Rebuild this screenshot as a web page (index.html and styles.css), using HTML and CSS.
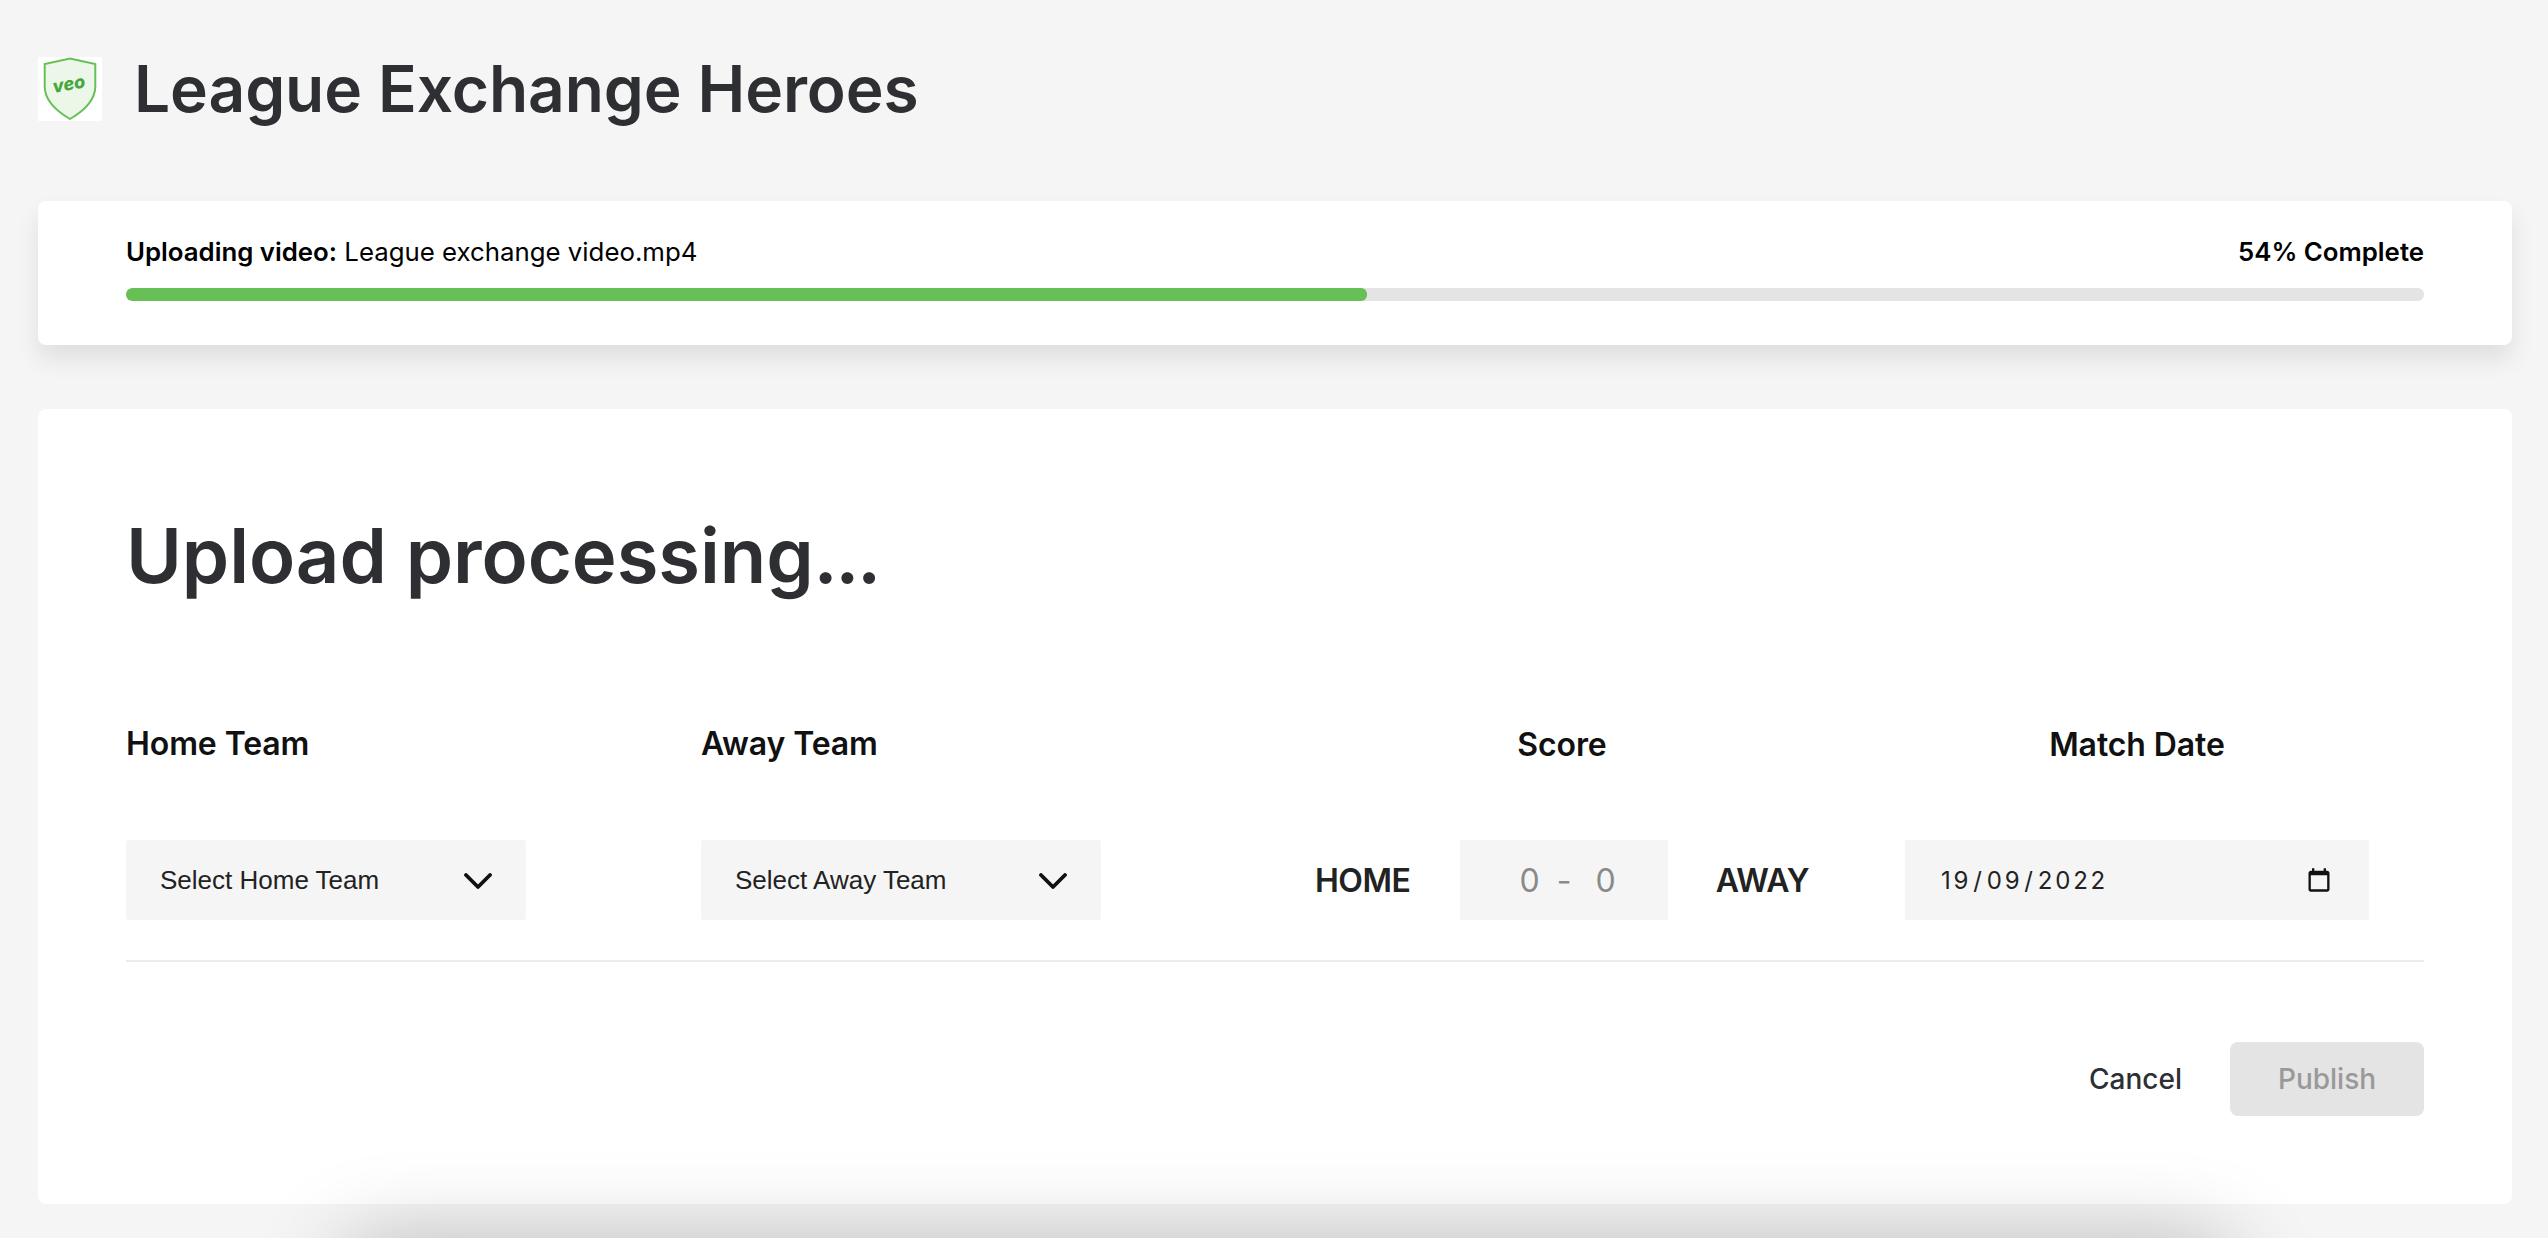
FILE: index.html
```html
<!DOCTYPE html>
<html lang="en">
<head>
<meta charset="utf-8">
<title>League Exchange Heroes</title>
<link rel="stylesheet" href="styles.css">
</head>
<body>
<header class="page-header">
  <div class="logo">
    <svg viewBox="0 0 64 64" width="64" height="64" aria-hidden="true">
      <path class="shield" d="M32 1.500 L57.300 7 V30 C57 44 44 55 32 62 C20 55 7 44 6.700 30 V7 Z"/>
      <text class="veo" x="31" y="33" text-anchor="middle" transform="rotate(-10 32 28)">veo</text>
    </svg>
  </div>
  <h1 class="team-name">League Exchange Heroes</h1>
</header>

<section class="card upload-card">
  <div class="upload-row">
    <div><strong>Uploading video:</strong> League exchange video.mp4</div>
    <strong>54% Complete</strong>
  </div>
  <div class="track"><div class="fill" style="width:54%"></div></div>
</section>

<section class="card form-card">
  <h2 class="form-title">Upload processing<span class="dots">...</span></h2>
  <div class="form-grid">
    <div class="field team-field">
      <div class="field-label">Home Team</div>
      <div class="select">
        <span>Select Home Team</span>
        <svg class="chevron" viewBox="0 0 28 16" width="28" height="16" aria-hidden="true"><path d="M2 2 L14 14 L26 2"/></svg>
      </div>
    </div>
    <div class="field team-field">
      <div class="field-label">Away Team</div>
      <div class="select">
        <span>Select Away Team</span>
        <svg class="chevron" viewBox="0 0 28 16" width="28" height="16" aria-hidden="true"><path d="M2 2 L14 14 L26 2"/></svg>
      </div>
    </div>
    <div class="field score-field">
      <div class="field-label centered">Score</div>
      <div class="score-row">
        <span class="side">HOME</span>
        <div class="score-box"><span>0</span><span class="dash">-</span><span>0</span></div>
        <span class="side">AWAY</span>
      </div>
    </div>
    <div class="field date-field">
      <div class="field-label centered">Match Date</div>
      <div class="date-box">
        <span class="date-value">19<i>/</i>09<i>/</i>2022</span>
        <svg class="calendar" viewBox="0 0 24 24" width="28" height="28" aria-hidden="true">
          <path d="M19 4h-1V2h-2v2H8V2H6v2H5c-1.100 0-2 .9-2 2v14c0 1.100.9 2 2 2h14c1.100 0 2-.9 2-2V6c0-1.100-.9-2-2-2zm0 16H5V8h14v12z"/>
        </svg>
      </div>
    </div>
  </div>
  <div class="actions">
    <button class="btn-cancel" type="button">Cancel</button>
    <button class="btn-publish" type="button" disabled>Publish</button>
  </div>
</section>
<div class="bottom-glow"></div>
</body>
</html>
```

FILE: styles.css
```css
* { box-sizing: border-box; }
html, body { height: 100%; }
body {
  margin: 0;
  background: #f5f5f5;
  font-family: Inter, "Liberation Sans", sans-serif;
  color: #111;
  overflow: hidden;
}
.page-header {
  display: flex;
  align-items: center;
  gap: 32px;
  height: 201px;
  padding: 0 38px 24px;
}
.logo { width: 64px; height: 64px; background: #fff; flex: none; }
.logo svg { display: block; }
.shield { fill: #ecf7ea; stroke: #66c056; stroke-width: 2; }
.veo { font: italic 800 18px Inter, sans-serif; fill: #46a83c; }
.team-name {
  margin: 0;
  font-size: 64px;
  line-height: 76px;
  font-weight: 600;
  letter-spacing: -0.08px;
  color: #2e2f33;
}
.card { background: #fff; border-radius: 8px; margin: 0 36px 0 38px; }
.upload-card {
  height: 144px;
  padding: 33px 88px 0;
  box-shadow: 0 14px 24px rgba(0, 0, 0, .09);
}
.upload-row {
  display: flex;
  justify-content: space-between;
  font-size: 25.800px;
  line-height: 36px;
  color: #000;
}
.upload-row strong { font-weight: 600; }
.track { height: 13px; margin-top: 18px; background: #e4e4e4; border-radius: 6px; overflow: hidden; }
.fill { height: 100%; background: #66c056; border-radius: 6px; }
.form-card {
  height: 795px;
  margin-top: 64px;
  padding: 0 88px;
}
.form-title {
  margin: 0;
  padding-top: 100px;
  font-size: 76px;
  line-height: 92px;
  font-weight: 600;
  letter-spacing: -0.1px;
  color: #2e2f33;
}
.dots { letter-spacing: -2.500px; }
.form-grid {
  display: flex;
  height: 238px;
  margin-top: 123px;
  border-bottom: 2px solid #ececec;
}
.field { display: flex; flex-direction: column; }
.team-field { width: 575px; }
.field-label {
  font-size: 32px;
  line-height: 40px;
  font-weight: 600;
  height: 116px;
  letter-spacing: -0.1px;
  color: #111;
}
.centered { text-align: center; padding-top: 1px; }
.select {
  width: 400px;
  height: 80px;
  background: #f5f5f5;
  border-radius: 3px;
  padding: 0 34px;
  display: flex;
  align-items: center;
  justify-content: space-between;
  font: 26px "Liberation Sans", Arial, sans-serif;
  color: #222;
}
.chevron { fill: none; stroke: #111; stroke-width: 3.800; stroke-linecap: round; stroke-linejoin: round; flex: none; margin-top: 2px; }
.score-field { width: 494px; margin-left: 39px; }
.score-row { display: flex; align-items: center; justify-content: space-between; }
.side { font-size: 32px; font-weight: 600; letter-spacing: -0.5px; white-space: nowrap; color: #222; }
.score-box {
  width: 208px;
  height: 80px;
  margin-left: 1px;
  background: #f5f5f5;
  display: flex;
  align-items: center;
  padding-left: 60px;
  font-size: 32px;
  color: #8a8a8a;
}
.dash { margin: 0 24px 0 17px; }
.date-field { width: 464px; margin-left: 96px; }
.date-box {
  height: 80px;
  background: #f5f5f5;
  padding: 0 36px;
  display: flex;
  align-items: center;
  justify-content: space-between;
}
.date-value { font-size: 24px; letter-spacing: 2.800px; color: #222; }
.date-value i { font-style: normal; margin: 0 2px; }
.calendar { fill: #111; flex: none; }
.actions {
  display: flex;
  justify-content: flex-end;
  align-items: center;
  gap: 48px;
  margin-top: 80px;
}
.btn-cancel {
  border: 0;
  background: none;
  padding: 0;
  font: 500 28px Inter, sans-serif;
  color: #2e2f33;
}
.btn-publish {
  width: 194px;
  height: 74px;
  border: 0;
  border-radius: 8px;
  background: #e4e4e4;
  font: 500 28px Inter, sans-serif;
  color: #999;
}
.bottom-glow {
  position: fixed;
  left: 400px;
  right: 375px;
  top: 1296px;
  height: 20px;
  box-shadow: 0 0 90px 50px rgba(0, 0, 0, .28);
}
```
